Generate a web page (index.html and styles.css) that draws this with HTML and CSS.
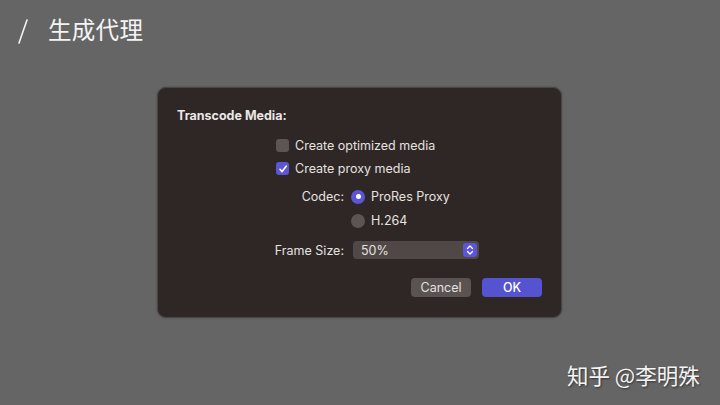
FILE: index.html
```html
<!DOCTYPE html>
<html lang="zh">
<head>
<meta charset="utf-8">
<link rel="stylesheet" href="styles.css">
</head>
<body>
<div class="page">
  <header class="heading">
    <svg class="slash" viewBox="0 0 10 25" width="10" height="25"><path d="M9 1 L1 24" stroke="#f2f2f2" stroke-width="1.6" stroke-linecap="round"/></svg>
    <h1 class="title">生成代理</h1>
  </header>
  <div class="dialog">
    <div class="dlg-title">Transcode Media:</div>
    <div class="options">
      <label class="check-row"><span class="checkbox"></span><span>Create optimized media</span></label>
      <label class="check-row"><span class="checkbox checked"><svg viewBox="0 0 12 12" width="12" height="12"><path d="M3 6.3 L5.1 8.6 L9.2 3.2" fill="none" stroke="#fff" stroke-width="1.6" stroke-linecap="round" stroke-linejoin="round"/></svg></span><span>Create proxy media</span></label>
    </div>
    <div class="codec">
      <span class="lbl">Codec:</span>
      <div class="radios">
        <div class="radio-row"><span class="radio on"></span><span>ProRes Proxy</span></div>
        <div class="radio-row"><span class="radio"></span><span>H.264</span></div>
      </div>
    </div>
    <div class="frame">
      <span class="lbl">Frame Size:</span>
      <div class="popup"><span>50%</span><span class="stepper"><svg viewBox="0 0 12 14" width="12" height="14"><path d="M3.5 5.5 L6 3 L8.5 5.5 M3.5 8.5 L6 11 L8.5 8.5" fill="none" stroke="#fff" stroke-width="1.3" stroke-linecap="round" stroke-linejoin="round"/></svg></span></div>
    </div>
    <div class="buttons">
      <button class="btn">Cancel</button>
      <button class="btn primary">OK</button>
    </div>
  </div>
  <div class="watermark">知乎&nbsp;@李明殊</div>
</div>
</body>
</html>
```
FILE: styles.css
```css
* { box-sizing: border-box; }
html, body { margin: 0; padding: 0; }
body {
  width: 720px; height: 405px; overflow: hidden;
  background: #656565;
  font-family: Inter, "Noto Sans", "Noto Sans CJK SC", sans-serif;
  color: #e6e2e0;
}
.page { position: relative; width: 720px; height: 405px; }
.heading {
  display: flex; align-items: center;
  padding: 19px 0 0 18px;
  height: 44px;
}
.slash { margin-right: 20px; flex: none; }
.title {
  margin: 0; font-weight: 400; font-size: 23.5px; color: #f4f4f4;
  font-family: "Noto Sans CJK SC", sans-serif; letter-spacing: 0.3px;
  line-height: 26px; position: relative; top: -3px;
}
.dialog {
  position: absolute; left: 157px; top: 87px;
  width: 405px; height: 231px;
  background: #2e2725;
  border: 1px solid #4a4442;
  border-radius: 9px;
  box-shadow: 0 0 2px rgba(0,0,0,.3);
  padding: 19px 0 0 19px;
  font-size: 12.5px;
}
.dlg-title { font-weight: 700; font-size: 12.5px; color: #ece8e6; line-height: 18px; }
.options { display: flex; flex-direction: column; gap: 6px; margin: 12px 0 0 99px; }
.check-row { display: flex; align-items: center; gap: 6px; line-height: 17px; }
.checkbox {
  width: 13px; height: 13px; border-radius: 3px;
  background: #5c5553; display: flex; align-items: center; justify-content: center;
}
.checkbox.checked { background: #5a56d6; }
.codec { display: flex; margin: 11px 0 0 0; }
.lbl { text-align: right; width: 174px; line-height: 17px; padding-right: 7px; flex: none; }
.radios { display: flex; flex-direction: column; gap: 7px; }
.radio-row { display: flex; align-items: center; gap: 6px; line-height: 17px; }
.radio { width: 14px; height: 14px; border-radius: 50%; background: #5c5553; position: relative; }
.radio.on { background: #5a56d6; }
.radio.on::after { content: ""; position: absolute; left: 4.5px; top: 4.5px; width: 5px; height: 5px; border-radius: 50%; background: #fff; }
.frame { display: flex; align-items: center; margin-top: 12px; }
.frame .lbl { width: 176px; padding-right: 9px; }
.popup {
  width: 126px; height: 18px; border-radius: 4px;
  background: #4f4846; display: flex; align-items: center; justify-content: space-between;
  padding: 0 2px 0 8px; line-height: 17px;
}
.stepper {
  width: 14px; height: 14px; border-radius: 3px; background: #5a56d6;
  display: flex; align-items: center; justify-content: center;
}
.buttons { display: flex; justify-content: flex-end; gap: 11px; margin: 19px 19px 0 0; }
.btn {
  width: 60px; height: 19px; border: none; border-radius: 4px;
  font-family: inherit; font-size: 12.5px; color: #e6e2e0;
  background: #5a5351; padding: 0; line-height: 19px;
}
.btn.primary { background: #5653d0; color: #fff; font-weight: 500; }
.watermark {
  position: absolute; left: 567px; top: 361px;
  font-family: "Noto Sans CJK SC", sans-serif; font-size: 21.5px; color: #f4f4f4;
  text-shadow: 1px 1px 2px rgba(0,0,0,.5);
  line-height: 28px;
}
```
